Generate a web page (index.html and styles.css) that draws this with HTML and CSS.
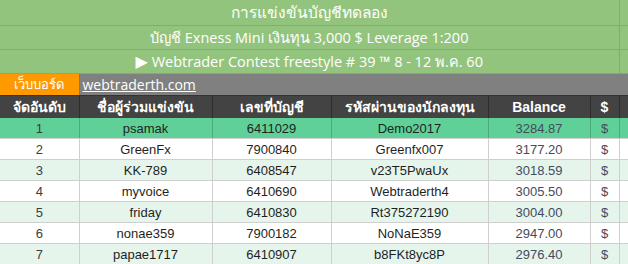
FILE: index.html
```html
<!DOCTYPE html>
<html>
<head>
<meta charset="utf-8">
<link rel="stylesheet" href="styles.css">
</head>
<body>
<table class="sheet">
  <colgroup>
    <col class="c1"><col class="c2"><col class="c3"><col class="c4"><col class="c5"><col class="c6"><col class="c7">
  </colgroup>
  <tr class="title"><td colspan="6" class="big">การแข่งขันบัญชีทดลอง</td><td></td></tr>
  <tr class="title"><td colspan="6">บัญชี Exness Mini เงินทุน 3,000 $ Leverage 1:200</td><td></td></tr>
  <tr class="title"><td colspan="6"><span class="tri">▶</span> Webtrader Contest freestyle # 39 ™ 8 - 12 พ.ค. 60</td><td></td></tr>
  <tr class="linkrow"><td class="board">เว็บบอร์ด</td><td colspan="6" class="link"><a href="#">webtraderth.com</a></td></tr>
  <tr class="head"><td>จัดอันดับ</td><td>ชื่อผู้ร่วมแข่งขัน</td><td>เลขที่บัญชี</td><td>รหัสผ่านของนักลงทุน</td><td>Balance</td><td>$</td><td></td></tr>
  <tr class="row top"><td class="rank">1</td><td>psamak</td><td>6411029</td><td>Demo2017</td><td class="bal">3284.87</td><td class="cur">$</td><td></td></tr>
  <tr class="row"><td class="rank">2</td><td>GreenFx</td><td>7900840</td><td>Greenfx007</td><td class="bal">3177.20</td><td class="cur">$</td><td></td></tr>
  <tr class="row alt"><td class="rank">3</td><td>KK-789</td><td>6408547</td><td>v23T5PwaUx</td><td class="bal">3018.59</td><td class="cur">$</td><td></td></tr>
  <tr class="row"><td class="rank">4</td><td>myvoice</td><td>6410690</td><td>Webtraderth4</td><td class="bal">3005.50</td><td class="cur">$</td><td></td></tr>
  <tr class="row alt"><td class="rank">5</td><td>friday</td><td>6410830</td><td>Rt375272190</td><td class="bal">3004.00</td><td class="cur">$</td><td></td></tr>
  <tr class="row"><td class="rank">6</td><td>nonae359</td><td>7900182</td><td>NoNaE359</td><td class="bal">2947.00</td><td class="cur">$</td><td></td></tr>
  <tr class="row alt"><td class="rank">7</td><td>papae1717</td><td>6410907</td><td>b8FKt8yc8P</td><td class="bal">2976.40</td><td class="cur">$</td><td></td></tr>
</table>
</body>
</html>
```
FILE: styles.css
```css
html, body {
  margin: 0;
  padding: 0;
  background: #ffffff;
}
.sheet {
  border-collapse: collapse;
  table-layout: fixed;
  width: 628px;
  font-family: "Liberation Sans", Arial, sans-serif;
}
.c1 { width: 79px; }
.c2 { width: 133px; }
.c3 { width: 119px; }
.c4 { width: 157px; }
.c5 { width: 102px; }
.c6 { width: 29px; }
.c7 { width: 9px; }
.sheet td {
  padding: 0;
  text-align: center;
  white-space: nowrap;
  overflow: hidden;
}
.title td {
  background: #93c47d;
  color: #ffffff;
  font-family: "Open Sans", "Noto Sans", sans-serif;
  font-size: 14.5px;
  height: 23px;
  border-bottom: 1px solid #7fb06a;
  border-right: 1px solid #7fb06a;
}
.title td.big { font-size: 15.5px; }
.title td:last-child { border-right: 0; }
.tri {
  font-family: "DejaVu Sans", sans-serif;
  font-size: 16px;
  line-height: 1;
}
.linkrow td {
  height: 21px;
  border-bottom: 1px solid #333333;
}
.board {
  background: #ff9900;
  color: #ffffff;
  font-family: "Open Sans", "Noto Sans", sans-serif;
  font-size: 13px;
  border-right: 1px solid #b07020;
}
.sheet .link {
  background: #808080;
  text-align: left;
  padding-left: 3px;
}
.link a {
  color: #ffffff;
  font-family: "Open Sans", "Noto Sans", sans-serif;
  font-size: 14px;
  text-decoration: underline;
}
.head td {
  background: #434343;
  color: #ffffff;
  font-weight: bold;
  font-size: 14px;
  height: 21px;
  border-right: 1px solid #2e2e2e;
}
.row td {
  height: 20px;
  font-size: 13px;
  color: #1f1f1f;
  border-right: 1px solid #cfcfcf;
  border-bottom: 1px solid #cfcfcf;
  background: #ffffff;
}
.row.alt td { background: #e6f5ec; }
.row.top td {
  background: #5fd198;
  border-right-color: #4cab7c;
  border-bottom-color: #cfcfcf;
}
.row td.rank { color: #3c3c3c; }
.row td.bal, .row td.cur { color: #454a5e; }
```
